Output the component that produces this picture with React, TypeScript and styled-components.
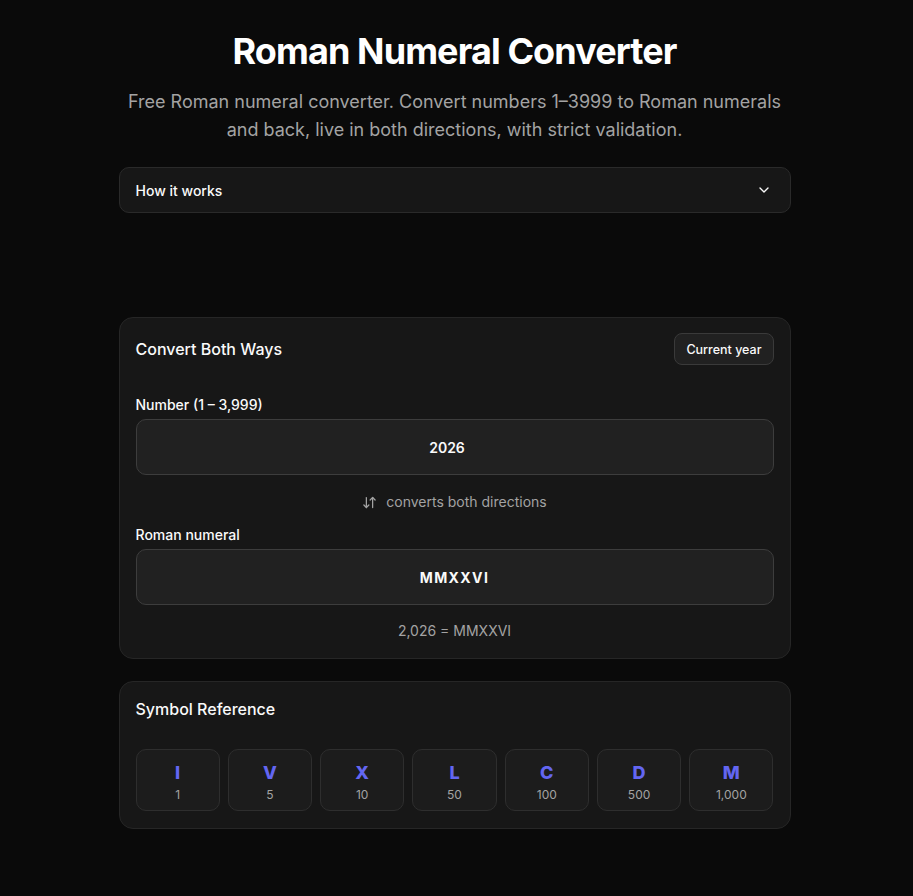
import { useState } from "react";
import styled, { createGlobalStyle } from "styled-components";
import { ArrowDownUp, ChevronDown } from "lucide-react";

const GlobalStyle = createGlobalStyle`
    html, body {
        margin: 0;
        padding: 0;
        background: #0a0a0a;
    }
    body {
        font-family: Inter, "Liberation Sans", sans-serif;
        color: #fafafa;
        -webkit-font-smoothing: antialiased;
    }
    * {
        box-sizing: border-box;
    }
`;

const SYMBOLS = [
    { letter: "I", value: "1" },
    { letter: "V", value: "5" },
    { letter: "X", value: "10" },
    { letter: "L", value: "50" },
    { letter: "C", value: "100" },
    { letter: "D", value: "500" },
    { letter: "M", value: "1,000" },
];

export default function App() {
    const [number, setNumber] = useState("2026");
    const [roman, setRoman] = useState("MMXXVI");

    return (
        <>
            <GlobalStyle />
            <Page>
                <Container>
                    <Title>Roman Numeral Converter</Title>
                    <Subtitle>
                        Free Roman numeral converter. Convert numbers 1–3999 to
                        Roman numerals and back, live in both directions, with
                        strict validation.
                    </Subtitle>

                    <Accordion>
                        <span>How it works</span>
                        <ChevronDown size={16} strokeWidth={2} />
                    </Accordion>

                    <Card $top={104}>
                        <CardHeader>
                            <CardTitle>Convert Both Ways</CardTitle>
                            <SmallButton>Current year</SmallButton>
                        </CardHeader>

                        <FieldLabel $top={30}>Number (1 – 3,999)</FieldLabel>
                        <Input
                            type="number"
                            value={number}
                            onChange={(e) => setNumber(e.target.value)}
                        />

                        <Hint>
                            <ArrowDownUp size={15} strokeWidth={2} />
                            converts both directions
                        </Hint>

                        <FieldLabel $top={13}>Roman numeral</FieldLabel>
                        <Input
                            $roman
                            value={roman}
                            onChange={(e) => setRoman(e.target.value)}
                        />

                        <Result>2,026 = MMXXVI</Result>
                    </Card>

                    <Card $top={22}>
                        <CardTitle $small>Symbol Reference</CardTitle>
                        <SymbolGrid>
                            {SYMBOLS.map((s) => (
                                <SymbolTile key={s.letter}>
                                    <SymbolLetter>{s.letter}</SymbolLetter>
                                    <SymbolValue>{s.value}</SymbolValue>
                                </SymbolTile>
                            ))}
                        </SymbolGrid>
                    </Card>
                </Container>
            </Page>
        </>
    );
}

const Page = styled.div`
    min-height: 896px;
    padding: 31px 4px 60px 0;
    background: #0a0a0a;
`;

const Container = styled.div`
    width: 672px;
    margin: 0 auto;
    display: flex;
    flex-direction: column;
`;

const Title = styled.h1`
    margin: 0;
    font-size: 36px;
    line-height: 40px;
    font-weight: 700;
    letter-spacing: -0.9px;
    text-align: center;
    color: #ffffff;
`;

const Subtitle = styled.p`
    margin: 17px -8px 0;
    font-size: 18px;
    line-height: 28px;
    color: #a3a3a3;
    text-align: center;
`;

const Accordion = styled.div`
    margin-top: 23px;
    height: 46px;
    display: flex;
    align-items: center;
    justify-content: space-between;
    padding: 0 18px 0 16px;
    background: #171717;
    border: 1px solid #2a2a2a;
    border-radius: 10px;
    font-size: 14px;
    font-weight: 500;
    color: #fafafa;
    cursor: pointer;
`;

const Card = styled.section<{ $top: number }>`
    margin-top: ${({ $top }) => $top}px;
    padding: 15px 16px 17px;
    background: #171717;
    border: 1px solid #262626;
    border-radius: 14px;
    display: flex;
    flex-direction: column;
`;

const CardHeader = styled.div`
    display: flex;
    align-items: center;
    justify-content: space-between;
    height: 32px;
`;

const CardTitle = styled.h2<{ $small?: boolean }>`
    margin: 0;
    font-size: 16px;
    line-height: ${({ $small }) => ($small ? "24px" : "32px")};
    font-weight: 500;
    color: #fafafa;
`;

const SmallButton = styled.button`
    height: 32px;
    padding: 0 11px;
    background: #212121;
    border: 1px solid #3a3a3a;
    border-radius: 8px;
    font-family: inherit;
    font-size: 12.5px;
    font-weight: 500;
    color: #fafafa;
    cursor: pointer;
`;

const FieldLabel = styled.label<{ $top: number }>`
    margin-top: ${({ $top }) => $top}px;
    font-size: 14px;
    line-height: 20px;
    font-weight: 500;
    color: #fafafa;
`;

const Input = styled.input<{ $roman?: boolean }>`
    margin-top: 4px;
    height: 56px;
    width: 100%;
    padding: 0 12px;
    background: #212121;
    border: 1px solid #3d3d3d;
    border-radius: 10px;
    text-align: center;
    font-family: inherit;
    font-size: 14px;
    font-weight: ${({ $roman }) => ($roman ? 700 : 600)};
    letter-spacing: ${({ $roman }) => ($roman ? "0.1em" : "0")};
    color: #fafafa;
    outline: none;
    color-scheme: dark;
`;

const Hint = styled.div`
    margin-top: 17px;
    display: flex;
    align-items: center;
    justify-content: center;
    gap: 9px;
    font-size: 14px;
    line-height: 20px;
    color: #a3a3a3;
`;

const Result = styled.div`
    margin-top: 16px;
    font-size: 14px;
    line-height: 20px;
    text-align: center;
    color: #a3a3a3;
`;

const SymbolGrid = styled.div`
    margin-top: 28px;
    display: grid;
    grid-template-columns: repeat(7, 1fr);
    gap: 8px;
`;

const SymbolTile = styled.div`
    display: flex;
    flex-direction: column;
    align-items: center;
    padding: 9px 0 7px;
    background: #1c1c1c;
    border: 1px solid #2e2e2e;
    border-radius: 10px;
`;

const SymbolLetter = styled.span`
    font-size: 18px;
    line-height: 28px;
    font-weight: 800;
    color: #6366f1;
`;

const SymbolValue = styled.span`
    font-size: 12px;
    line-height: 16px;
    color: #a3a3a3;
`;
